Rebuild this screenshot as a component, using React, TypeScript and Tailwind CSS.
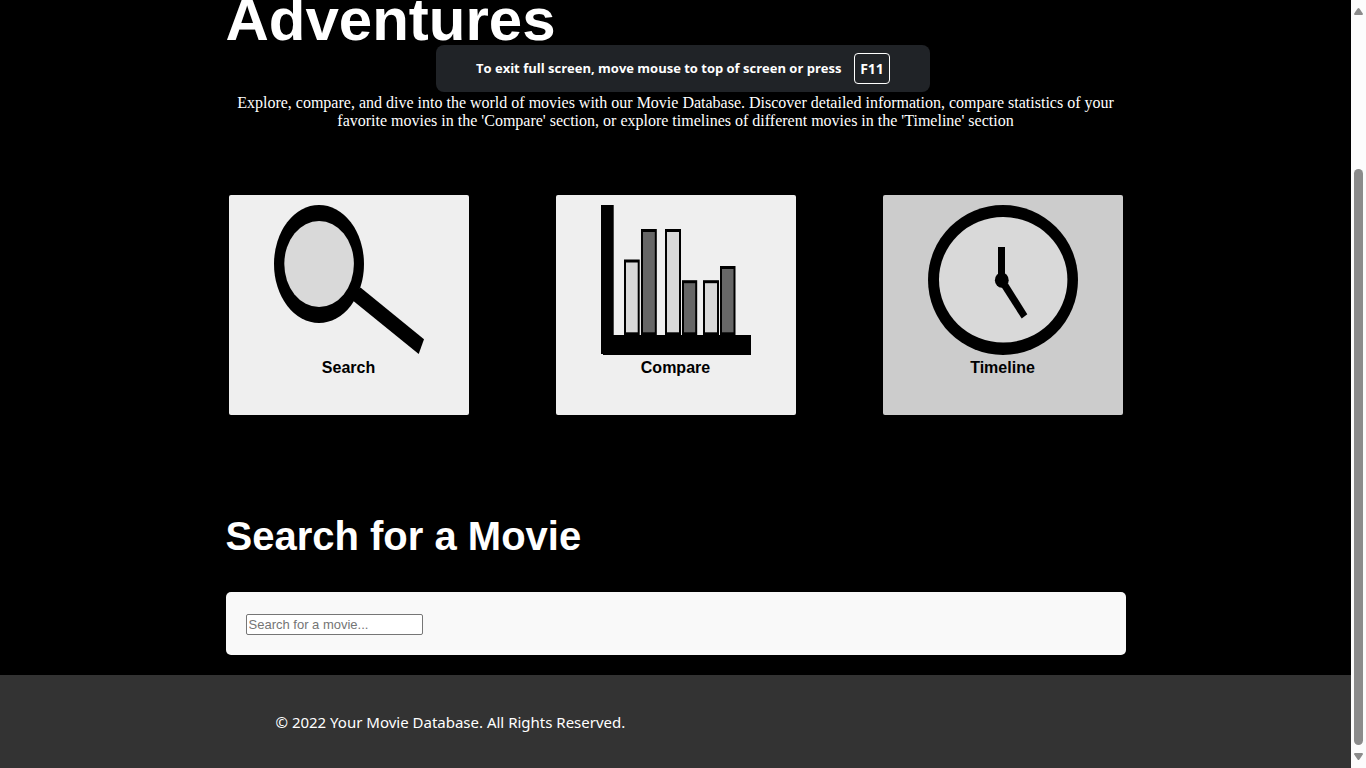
import type { ReactNode } from 'react';

function SearchIcon() {
  return (
    <svg className="size-[150px]" viewBox="0 0 150 150" aria-hidden="true">
      <ellipse cx="45" cy="59" rx="45" ry="59" />
      <ellipse cx="45.1" cy="59" rx="34.8" ry="43" fill="#d9d9d9" />
      <polygon points="86.5,82.5 150,134.3 144.7,149 80,96.5 79,90" />
    </svg>
  );
}

const bars = [
  { x: 23, y: 54.5, w: 15.7, fill: '#d9d9d9' },
  { x: 40, y: 24, w: 15.8, fill: '#666666' },
  { x: 64, y: 24, w: 16, fill: '#d9d9d9' },
  { x: 81, y: 75.2, w: 15.2, fill: '#666666' },
  { x: 102, y: 75.2, w: 16, fill: '#d9d9d9' },
  { x: 119, y: 61, w: 15.5, fill: '#666666' },
];

function CompareIcon() {
  return (
    <svg className="size-[150px]" viewBox="0 0 150 150" aria-hidden="true">
      <path d="M0 0H12.7V130H150V150H2V149H0Z" />
      {bars.map((bar) => (
        <g key={bar.x}>
          <rect x={bar.x} y={bar.y} width={bar.w} height={131 - bar.y} />
          <rect x={bar.x + 2} y={bar.y + 3} width={bar.w - 4} height={124.3 - bar.y} fill={bar.fill} />
        </g>
      ))}
    </svg>
  );
}

function ClockIcon() {
  return (
    <svg className="size-[150px]" viewBox="0 0 150 150" aria-hidden="true">
      <circle cx="75" cy="75" r="75" />
      <ellipse cx="75.2" cy="74.8" rx="64.2" ry="62.8" fill="#d9d9d9" />
      <rect x="70" y="42" width="7" height="33" />
      <ellipse cx="73.8" cy="75.2" rx="6.9" ry="7.6" />
      <polygon points="73.5,82 93.7,113.6 99.3,109.3 80,78.5" />
    </svg>
  );
}

function Card({ label, active = false, children }: { label: string; active?: boolean; children: ReactNode }) {
  return (
    <button
      type="button"
      className={`flex h-[220px] w-60 flex-col items-center rounded-[2px] p-2.5 text-base leading-[26px] font-bold text-black ${
        active ? 'bg-[#cccccc]' : 'bg-[#efefef]'
      }`}
    >
      {children}
      <span>{label}</span>
    </button>
  );
}

function Scrollbar() {
  return (
    <div className="flex w-[15px] shrink-0 flex-col items-center bg-[#fcfcfc] py-2" aria-hidden="true">
      <svg className="h-[7px] w-[9px]" viewBox="0 0 9 7" fill="#8b8b8b">
        <path d="M3.6.6Q4.5-.5 5.4.6L8.8 5.6Q9.2 7 8 7H1Q-.2 7 .2 5.6Z" />
      </svg>
      <div className="flex w-[9px] flex-1 flex-col pt-[154px] pb-2">
        <div className="flex-1 rounded-full bg-[#8b8b8b]" />
      </div>
      <svg className="h-[7px] w-[9px]" viewBox="0 0 9 7" fill="#8b8b8b">
        <path d="M3.6 6.4Q4.5 7.5 5.4 6.4L8.8 1.4Q9.2 0 8 0H1Q-.2 0 .2 1.4Z" />
      </svg>
    </div>
  );
}

export default function App() {
  return (
    <div className="relative flex min-h-screen overflow-hidden bg-black font-['Liberation_Sans',Arial,sans-serif] text-white">
      <div className="flex min-w-0 flex-1 flex-col">
        <main className="mx-auto w-full max-w-[900px] pb-5">
          <h1 className="text-[60px] leading-10 font-bold">Adventures</h1>
          <p className="mt-[54px] text-center font-['Liberation_Serif','Times_New_Roman',serif] text-base leading-[18px]">
            Explore, compare, and dive into the world of movies with our Movie Database. Discover detailed information,
            compare statistics of your favorite movies in the 'Compare' section, or explore timelines of different
            movies in the 'Timeline' section
          </p>
          <div className="mt-[65px] flex flex-wrap justify-between gap-y-5 px-[3px]">
            <Card label="Search">
              <SearchIcon />
            </Card>
            <Card label="Compare">
              <CompareIcon />
            </Card>
            <Card label="Timeline" active>
              <ClockIcon />
            </Card>
          </div>
          <h2 className="mt-[101px] text-[40px] leading-10 font-bold">Search for a Movie</h2>
          <form className="mt-9 flex rounded-[5px] bg-[#f9f9f9] px-5 pt-[22px] pb-5">
            <input
              type="text"
              aria-label="Search for a movie"
              placeholder="Search for a movie..."
              className="h-[21px] w-[177px] rounded-[2px] border border-[#767676] bg-white px-0.5 text-[13px] text-black placeholder:text-[#757575]"
            />
          </form>
        </main>
        <footer className="flex-1 bg-[#333333]">
          <div className="mx-auto max-w-[900px] px-[50px] pt-9 pb-8">
            <p className="font-['Noto_Sans','Open_Sans',sans-serif] text-[15px] leading-[22px]">
              © 2022 Your Movie Database. All Rights Reserved.
            </p>
          </div>
        </footer>
      </div>
      <Scrollbar />
      <div className="absolute inset-x-0 top-[45px] flex justify-center">
        <div
          role="status"
          className="flex h-[47px] w-[494px] items-center justify-between rounded-lg bg-[#202327] px-10 font-['Open_Sans','Noto_Sans',sans-serif] text-[13px] font-bold"
        >
          <span>To exit full screen, move mouse to top of screen or press</span>
          <kbd className="flex h-[31px] w-9 items-center justify-center rounded border border-white font-['Open_Sans','Noto_Sans',sans-serif] text-sm">
            F11
          </kbd>
        </div>
      </div>
    </div>
  );
}
